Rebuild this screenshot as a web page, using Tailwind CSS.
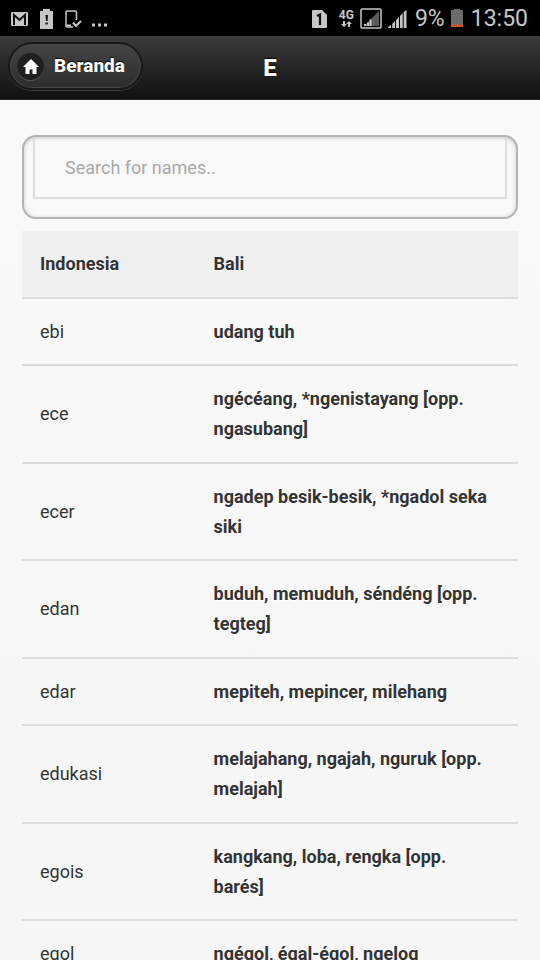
<!DOCTYPE html>
<html lang="id">
  <head>
    <meta charset="UTF-8" />
    <meta name="viewport" content="width=device-width, initial-scale=1.0" />
    <title>Kamus Indonesia - Bali: E</title>
    <script src="https://cdn.jsdelivr.net/npm/@tailwindcss/browser@4"></script>
  </head>
  <body class="h-screen overflow-hidden flex flex-col bg-[#f9f9f9] font-[Roboto,sans-serif] text-[18px] leading-[30px] text-[#333]">
    <!-- status bar -->
    <div class="h-9 shrink-0 bg-black text-[#c6c6c6] flex items-center justify-between pt-[2px] pl-[10px] pr-3">
      <div class="flex items-center">
        <svg width="18" height="16" viewBox="0 0 18 16" class="mr-3">
          <rect x="1" y="1" width="17" height="14" rx="1" fill="#c6c6c6" />
          <path d="M4 14V4l5.500 5L15 4v10" fill="none" stroke="#111" stroke-width="2" />
        </svg>
        <svg width="13" height="20" viewBox="0 0 13 20" class="mr-3">
          <path d="M0 2h3V0h7v2h3v18H0z" fill="#c6c6c6" />
          <path d="M5.500 6h2.500l-.5 6h-1.500zM5.500 13.500h2.300v2H5.500z" fill="#111" />
        </svg>
        <svg width="17" height="18" viewBox="0 0 17 18" class="mr-[10px]" fill="none" stroke="#c6c6c6" stroke-width="1.500">
          <path d="M11.500 10V2q0-1-1-1H2Q1 1 1 2v14q0 1 1 1h6" />
          <path d="M1 15.500h5M8 12.500l3 3.500 5-5" stroke-width="2" />
        </svg>
        <svg width="16" height="18" viewBox="0 0 16 18" fill="#c6c6c6">
          <path d="M0 13.500h3v3H0zM6 13.500h3v3H6zM12 13.500h3v3h-3z" />
        </svg>
      </div>
      <div class="flex items-center">
        <svg width="15" height="18" viewBox="0 0 15 18" class="mr-3">
          <path d="M1 0h9l5 5v12q0 1-1 1H1q-1 0-1-1V1q0-1 1-1z" fill="#c6c6c6" />
          <path d="M5 6l3-1.500V15" fill="none" stroke="#111" stroke-width="2.200" />
        </svg>
        <div class="flex flex-col items-center mr-[6px]">
          <span class="text-[12px] leading-[11px] font-bold">4G</span>
          <svg width="11" height="7" viewBox="0 0 11 7" fill="#c6c6c6">
            <path d="M2 0h2v3h2L3 6 0 3h2zM7 6h2V3h2L8 0 5 3h2z" />
          </svg>
        </div>
        <svg width="22" height="21" viewBox="0 0 22 21" class="mr-[6px] mb-[2px]">
          <rect x="1" y="1" width="20" height="19" rx="1" fill="none" stroke="#c6c6c6" stroke-width="1.500" />
          <path d="M4 18L19 3v15z" fill="#5a5a5a" />
          <path d="M4 16h2v2H4zM7 14.500h2V18H7zM9.500 11.500h2V18h-2z" fill="#c6c6c6" />
        </svg>
        <svg width="19" height="19" viewBox="0 0 19 19" class="mr-2" fill="#c6c6c6">
          <path d="M0 17l3-2v3H0zM4.200 14l2.800-3v7H4.200zM8 10l3-3v11H8zM12 6l2.700-3v15H12zM15.700 2l2.800-2v18h-2.800z" />
        </svg>
        <span class="text-[23px] mr-[6px]">9%</span>
        <svg width="12" height="18" viewBox="0 0 12 18" class="mr-2 mb-[2px]">
          <path d="M0 1h3V0h6v1h3v17H0z" fill="#6b6b6b" />
          <path d="M0 15.500h12V18H0z" fill="#d0532f" />
        </svg>
        <span class="text-[23px]">13:50</span>
      </div>
    </div>

    <header class="relative h-16 shrink-0 flex items-center justify-center bg-linear-to-b from-[#3c3c3c] to-[#111] border-b border-[#2a2a2a] text-white font-extrabold text-shadow-[0_-1px_1px_#000]">
      <a
        href="#"
        class="absolute left-2 top-[6px] h-12 pl-[7px] pr-4 flex items-center gap-[10px] rounded-full border-2 border-[#191919] bg-linear-to-b from-[#444] to-[#2d2d2d] shadow-[inset_0_0_0_1px_#484848,0_1px_0_#3c3c3c] text-[19px]"
      >
        <span class="size-[27px] rounded-full bg-[#202020] shadow-[0_1px_0_#555] flex items-center justify-center">
          <svg width="16" height="15" viewBox="0 0 16 15" fill="#fff">
            <path d="M8 0l8 8h-2.500v7H9.500v-4.500h-3V15h-4V8H0z" />
          </svg>
        </span>
        Beranda
      </a>
      <h1 class="text-[24px]">E</h1>
    </header>

    <main class="flex-1 min-h-0 overflow-y-auto [scrollbar-width:none] px-[22px] pt-[35px] bg-linear-to-b from-[#f9f9f9] to-[#f6f6f6]">
      <div class="rounded-[14px] border-2 border-[#b4b4b4] px-[9px] pb-[18px] mb-3 shadow-[inset_0_1px_4px_rgba(0,0,0,0.2)]">
        <input
          type="text"
          id="myInput"
          aria-label="Search for names.."
          placeholder="Search for names.."
          class="block w-full h-[62px] px-[30px] border-2 border-t-0 border-[#ddd] outline-none placeholder:text-[#a9a9a9]"
        />
      </div>

      <table id="myTable" class="w-full table-fixed border-collapse text-left text-shadow-[0_1px_0_#fff]">
        <colgroup>
          <col class="w-[35%]" />
          <col />
        </colgroup>
        <tbody class="[&_tr]:border-b-2 [&_tr]:border-[#ddd] [&_td]:px-[18px] [&_th]:px-[18px] [&_td]:pt-[18px] [&_th]:pt-[18px] [&_tr:nth-child(odd)>*]:pb-[18px] [&_tr:nth-child(even)>*]:pb-[17px] [&_td+td]:font-bold">
          <tr class="bg-[#f0f0f0]">
            <th>Indonesia</th>
            <th>Bali</th>
          </tr>
          <tr>
            <td>ebi</td>
            <td>udang tuh</td>
          </tr>
          <tr>
            <td>ece</td>
            <td>ngécéang, *ngenistayang [opp. ngasubang]</td>
          </tr>
          <tr>
            <td>ecer</td>
            <td>ngadep besik-besik, *ngadol seka siki</td>
          </tr>
          <tr>
            <td>edan</td>
            <td>buduh, memuduh, séndéng [opp. tegteg]</td>
          </tr>
          <tr>
            <td>edar</td>
            <td>mepiteh, mepincer, milehang</td>
          </tr>
          <tr>
            <td>edukasi</td>
            <td>melajahang, ngajah, nguruk [opp. melajah]</td>
          </tr>
          <tr>
            <td>egois</td>
            <td>kangkang, loba, rengka [opp. barés]</td>
          </tr>
          <tr>
            <td>egol</td>
            <td>ngégol, égal-égol, ngelog</td>
          </tr>
        </tbody>
      </table>
    </main>

    <script>
      const input = document.getElementById("myInput");

      input.addEventListener("keyup", () => {
        const filter = input.value.toUpperCase();
        document.querySelectorAll("#myTable tr").forEach((row) => {
          const td = row.querySelector("td");
          if (!td) return;
          row.style.display = td.textContent.toUpperCase().includes(filter) ? "" : "none";
        });
      });
    </script>
  </body>
</html>
